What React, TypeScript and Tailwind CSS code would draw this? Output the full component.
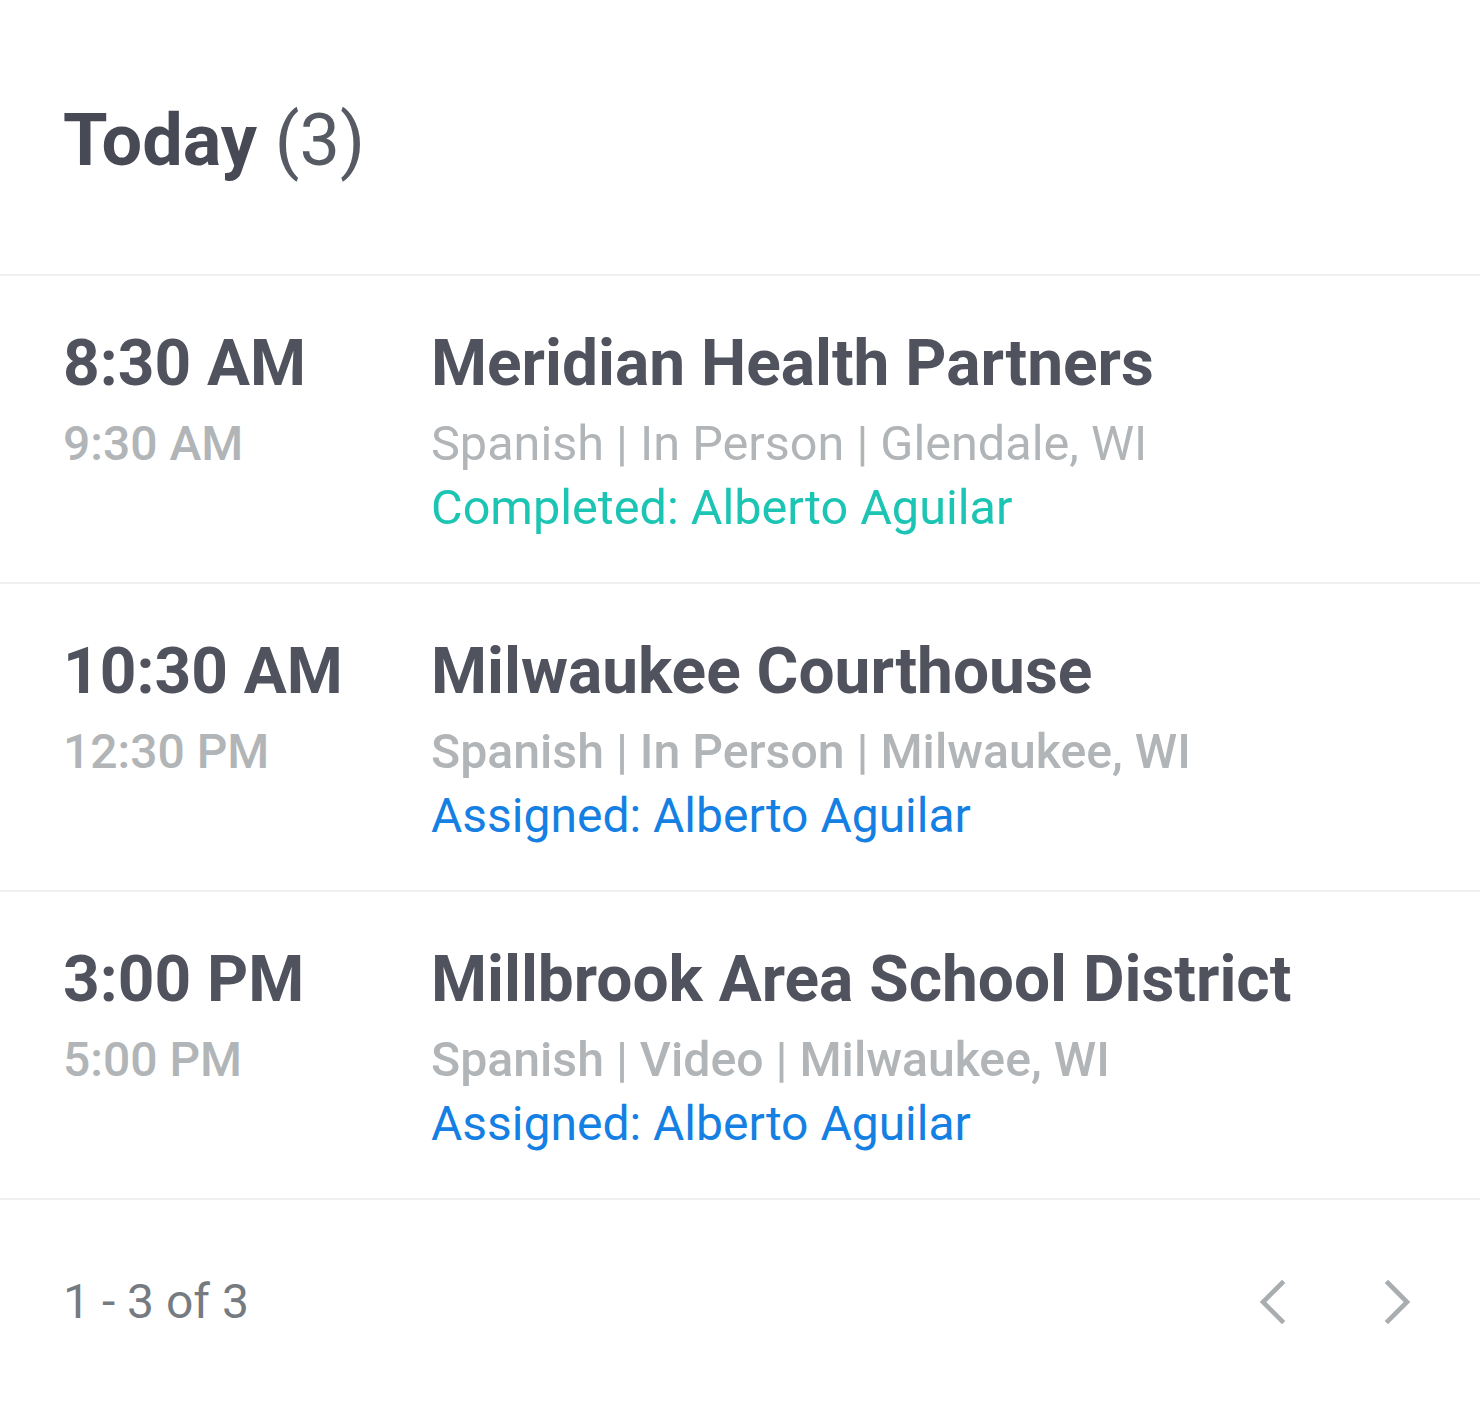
type Appointment = {
  start: string
  end: string
  client: string
  meta: string
  metaBold: boolean
  status: "Completed" | "Assigned"
  interpreter: string
}

const APPOINTMENTS: Appointment[] = [
  {
    start: "8:30 AM",
    end: "9:30 AM",
    client: "Meridian Health Partners",
    meta: "Spanish | In Person | Glendale, WI",
    metaBold: false,
    status: "Completed",
    interpreter: "Alberto Aguilar",
  },
  {
    start: "10:30 AM",
    end: "12:30 PM",
    client: "Milwaukee Courthouse",
    meta: "Spanish | In Person | Milwaukee, WI",
    metaBold: true,
    status: "Assigned",
    interpreter: "Alberto Aguilar",
  },
  {
    start: "3:00 PM",
    end: "5:00 PM",
    client: "Millbrook Area School District",
    meta: "Spanish | Video | Milwaukee, WI",
    metaBold: true,
    status: "Assigned",
    interpreter: "Alberto Aguilar",
  },
]

const STATUS_STYLE: Record<Appointment["status"], string> = {
  Completed: "text-[48.6px] text-[#1cc5b3]",
  Assigned: "text-[48px] text-[#1580e3]",
}

function Chevron({ dir }: { dir: "left" | "right" }) {
  return (
    <svg width="30" height="44" viewBox="0 0 30 44" fill="none" className="text-[#a8adaf]">
      <polyline
        points={dir === "left" ? "25,3 6,22 25,41" : "5,3 24,22 5,41"}
        stroke="currentColor"
        strokeWidth="4.6"
        strokeLinecap="square"
        strokeLinejoin="miter"
      />
    </svg>
  )
}

function Row({ a }: { a: Appointment }) {
  return (
    <div className="flex pl-[63px] pt-[50px] pb-[42px] border-b-2 border-[#efefef]">
      <div className="w-[368px] shrink-0">
        <div className="text-[64px] leading-[76px] font-bold text-[#50535e]">{a.start}</div>
        <div className="mt-[10px] text-[48px] leading-[64px] font-medium text-[#b1b5b7]">{a.end}</div>
      </div>
      <div className="flex-1 min-w-0">
        <div className="text-[64px] leading-[76px] font-bold text-[#50535e] whitespace-nowrap">{a.client}</div>
        <div
          className={`mt-[10px] leading-[64px] text-[#b1b5b7] whitespace-nowrap ${
            a.metaBold ? "text-[48.2px] font-medium" : "text-[48.6px] font-normal"
          }`}
        >
          {a.meta}
        </div>
        <div className={`leading-[64px] whitespace-nowrap ${STATUS_STYLE[a.status]}`}>
          {a.status}: {a.interpreter}
        </div>
      </div>
    </div>
  )
}

export default function App() {
  return (
    <div className="w-[1480px] h-[1412px] bg-white font-['Roboto',_'Liberation_Sans',_sans-serif]">
      {/* Header */}
      <div className="h-[276px] pl-[63px] pt-[97px] border-b-2 border-[#efefef]">
        <h1 className="text-[72px] leading-[88px] text-[#474a55]">
          <span className="font-bold">Today</span> <span className="font-normal text-[#555a63]">(3)</span>
        </h1>
      </div>

      {APPOINTMENTS.map((a, i) => (
        <Row key={i} a={a} />
      ))}

      {/* Pagination */}
      <div className="flex items-start justify-between pl-[63px] pr-[67px] pt-[70px]">
        <div className="text-[48px] leading-[64px] text-[#767b82]">1 - 3 of 3</div>
        <div className="flex items-center gap-[96px] pt-[10px]">
          <Chevron dir="left" />
          <Chevron dir="right" />
        </div>
      </div>
    </div>
  )
}
